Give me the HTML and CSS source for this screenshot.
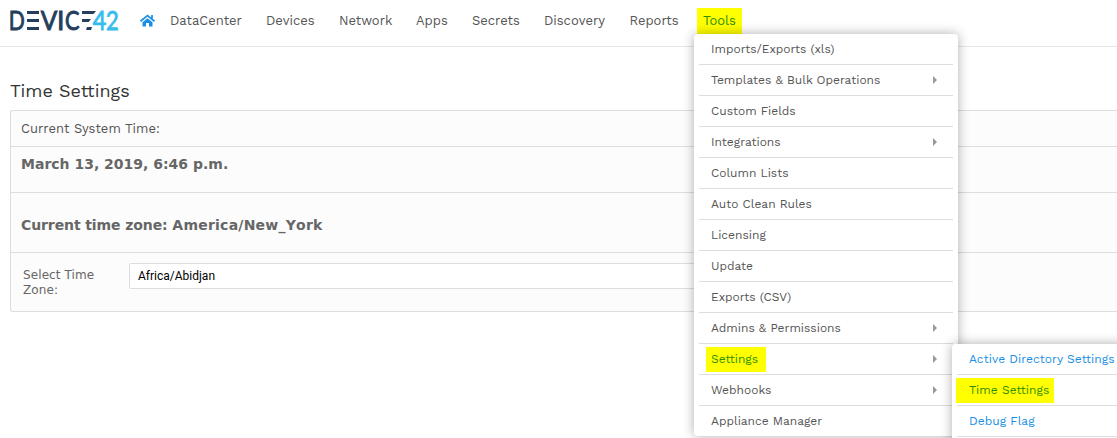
FILE: index.html
```html
<!DOCTYPE html>
<html lang="en">
<head>
<meta charset="utf-8">
<title>Time Settings</title>
<link rel="stylesheet" href="styles.css">
</head>
<body>
<header class="topbar">
  <svg class="logo" width="110" height="22" viewBox="0 0 110 22" role="img" aria-label="Device42">
    <g class="logo-dark">
      <text x="-1.300" y="19.600" textLength="16" lengthAdjust="spacingAndGlyphs">D</text>
      <text x="30.700" y="19.600" textLength="16.500" lengthAdjust="spacingAndGlyphs">V</text>
      <text x="47" y="19.600" textLength="7" lengthAdjust="spacing">I</text>
      <text x="55" y="19.600" textLength="14.500" lengthAdjust="spacingAndGlyphs">C</text>
      <rect x="17" y="1" width="12" height="3"/><rect x="17" y="9" width="12" height="3"/><rect x="17" y="17" width="12" height="3"/>
      <path d="M72 1h14l-2.500 3H72zM72 9h9l-2.300 3H72zM77 17h5l-1 3h-5z"/>
    </g>
    <g class="logo-blue">
      <text x="82.800" y="19.600" textLength="13.500" lengthAdjust="spacingAndGlyphs">4</text>
      <text x="96" y="19.600" textLength="12.700" lengthAdjust="spacingAndGlyphs">2</text>
    </g>
  </svg>
  <svg class="home" width="15" height="13" viewBox="0 0 15 13" aria-hidden="true">
    <path d="M7.500 4.200 12.500 8.300v4.200H9V9H6v3.500H2.500V8.300z"/>
    <path d="M.5 7.300 7.500 1.600 14.500 7.300M12 1v4" class="home-roof"/>
  </svg>
  <nav class="nav">
    <a>DataCenter</a><a>Devices</a><a>Network</a><a>Apps</a><a>Secrets</a><a>Discovery</a><a>Reports</a><a><mark class="tools">Tools</mark></a>
  </nav>
</header>
<main class="content">
  <h1 class="title">Time Settings</h1>
  <section class="panel">
    <div class="row row-label"><span>Current System Time:</span></div>
    <div class="row row-time">March 13, 2019, 6:46 p.m.</div>
    <div class="row row-zone">Current time zone: <span class="zone">America/New_York</span></div>
    <div class="row row-select"><label class="label">Select Time<br>Zone:</label><div class="select">Africa/Abidjan</div></div>
  </section>
</main>
<div class="menu">
  <div class="item"><span>Imports/Exports (xls)</span></div>
  <div class="item sub"><span>Templates &amp; Bulk Operations</span></div>
  <div class="item"><span>Custom Fields</span></div>
  <div class="item sub"><span>Integrations</span></div>
  <div class="item"><span>Column Lists</span></div>
  <div class="item"><span>Auto Clean Rules</span></div>
  <div class="item"><span>Licensing</span></div>
  <div class="item"><span>Update</span></div>
  <div class="item"><span>Exports (CSV)</span></div>
  <div class="item sub"><span>Admins &amp; Permissions</span></div>
  <div class="item sub"><mark class="settings">Settings</mark></div>
  <div class="item sub"><span>Webhooks</span></div>
  <div class="item"><span>Appliance Manager</span></div>
</div>
<div class="submenu-clip">
  <div class="menu submenu">
    <div class="item"><span>Active Directory Settings</span></div>
    <div class="item"><mark class="time-settings">Time Settings</mark></div>
    <div class="item item-end"><span>Debug Flag</span></div>
  </div>
</div>
</body>
</html>
```
FILE: styles.css
```css
* { box-sizing: border-box; }
html { overflow: hidden; }
body { margin: 0; height: 438px; overflow: hidden; position: relative; background: #fff; color: #555; font-family: "Work Sans", Inter, sans-serif; font-size: 13px; }
.topbar { height: 47px; border-bottom: 1px solid #e8e8e8; display: flex; padding-left: 10px; }
.logo { margin-top: 10px; flex: none; overflow: visible; }
.logo text { font: 26.5px Lato, sans-serif; stroke-width: .9; }
.logo-dark { fill: #253e5b; }
.logo-blue { fill: #36bdec; }
.logo-dark text { stroke: #253e5b; }
.logo-blue text { stroke: #36bdec; }
.home { margin: 14px 0 0 20px; flex: none; fill: #188fe5; }
.home-roof { fill: none; stroke: #188fe5; stroke-width: 1.7; }
.nav { display: grid; grid-template-columns: 96px 73px 77px 56px 72px 85.5px 73.5px 50px; margin-left: 15px; height: 41px; line-height: 41px; }
.nav a { white-space: nowrap; }
mark { background: #ff0; color: #2f8f00; }
.tools { display: block; width: 45px; height: 27px; line-height: 25px; margin: 8px 0 0 -6px; padding-left: 6px; }
.content { padding: 33px 0 0 10px; }
.title { margin: 0; height: 30px; line-height: 22px; font-size: 18px; font-weight: 400; color: #333; }
.panel { border: 1px solid #ddd; border-right: 0; border-radius: 3px 0 0 3px; background: #fcfcfc; height: 202px; }
.row { border-bottom: 1px solid #ddd; padding-left: 10px; }
.row:last-child { border: 0; }
.row-label { height: 36px; line-height: 35px; letter-spacing: .03px; }
.row-time, .row-zone { font: bold 14px "DejaVu Sans", sans-serif; color: #666; }
.row-time { height: 46px; line-height: 34px; }
.row-zone { height: 60px; line-height: 64px; letter-spacing: -.1px; }
.zone { letter-spacing: .23px; font-kerning: none; }
.row-select { height: 59px; padding: 10px 0 0 12px; display: flex; }
.label { width: 106px; padding-top: 5px; font: 12px/15px "DejaVu Sans", sans-serif; letter-spacing: .1px; color: #666; }
.select { width: 620px; height: 26px; line-height: 24px; padding-left: 8px; border: 1px solid #ddd; border-radius: 2px; background: #fff; color: #000; font-family: Roboto, sans-serif; font-size: 12px; }
.menu { position: absolute; left: 694px; top: 34px; width: 264px; height: 402px; padding: 0 5px; border-radius: 4px; background: #fff; box-shadow: 0 0 12px rgba(0,0,0,.32); font-size: 12px; }
.item { height: 31px; line-height: 30px; padding-left: 12px; border-bottom: 1px solid #ddd; display: flex; align-items: center; white-space: nowrap; }
.item:last-child { border-bottom-color: transparent; }
.submenu .item-end { border-bottom-color: #ddd; }
.sub::after { content: ""; margin: 0 16px 0 auto; border: solid transparent; border-width: 4px 0 4px 4px; border-left-color: #999; }
.submenu-clip { position: absolute; left: 932px; top: 324px; width: 185px; height: 114px; overflow: hidden; }
.submenu { left: 20px; top: 20px; height: 120px; width: 200px; color: #188fe5; }
.submenu .item { letter-spacing: .05px; }
.settings, .time-settings { height: 25px; line-height: 25px; }
.settings { margin-left: -5px; padding-left: 5px; width: 60px; }
.time-settings { margin-left: -13px; padding-left: 13px; width: 98px; }
```
